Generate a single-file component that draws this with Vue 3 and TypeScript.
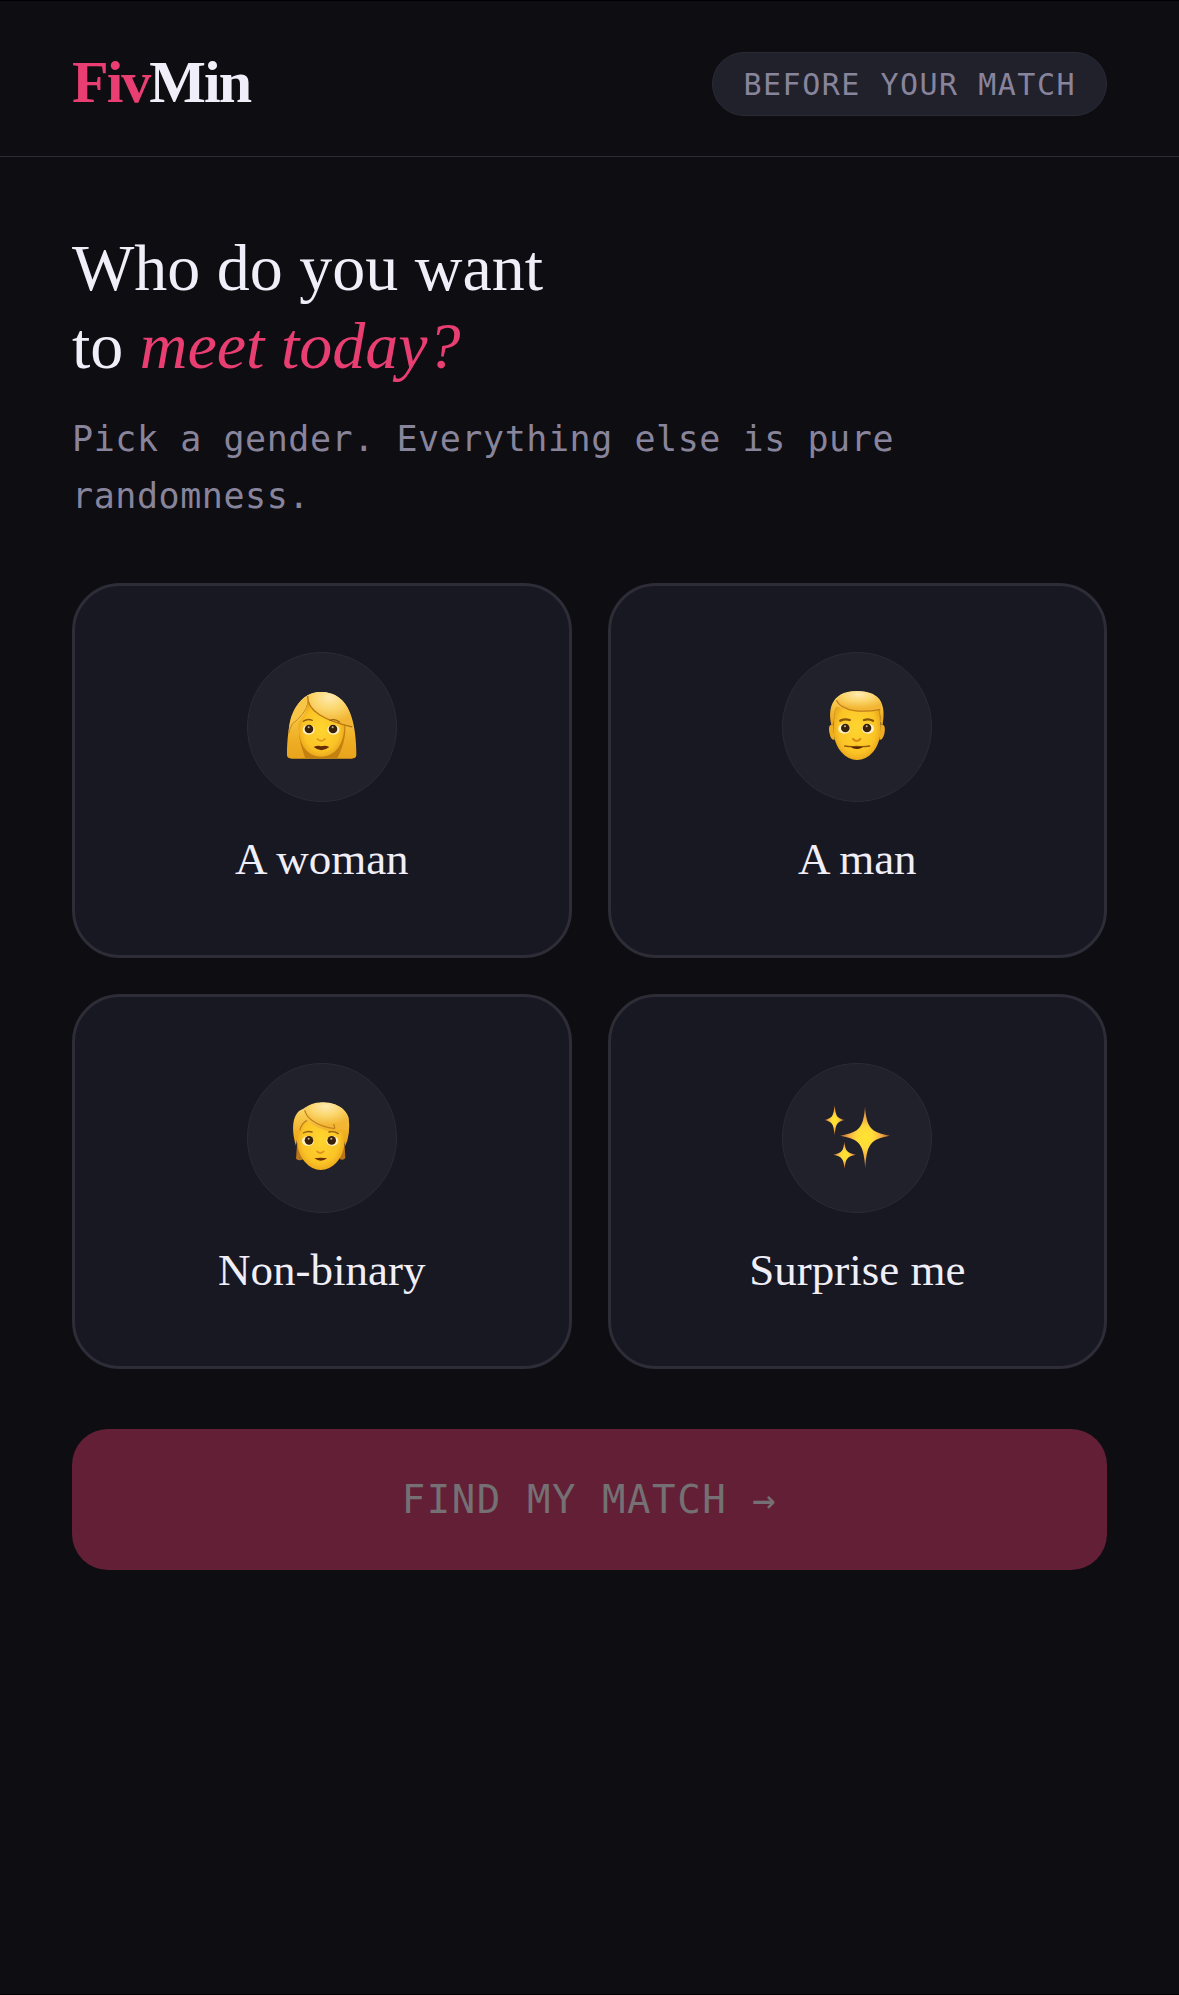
<script setup lang="ts">
import { ref } from 'vue'

type ChoiceId = 'woman' | 'man' | 'nonbinary' | 'surprise'

interface Choice {
  id: ChoiceId
  label: string
  viewBox: string
}

const choices: Choice[] = [
  { id: 'woman', label: 'A woman', viewBox: '24 39 444 444' },
  { id: 'man', label: 'A man', viewBox: '39 39 444 444' },
  { id: 'nonbinary', label: 'Non-binary', viewBox: '24 42 444 444' },
  { id: 'surprise', label: 'Surprise me', viewBox: '39 42 444 444' },
]

const selected = ref<ChoiceId | null>(null)
</script>

<template>
  <div class="page">
    <header class="header">
      <div class="logo"><span class="accent">Fiv</span>Min</div>
      <span class="pill">BEFORE YOUR MATCH</span>
    </header>

    <main class="main">
      <h1 class="title">Who do you want<br />to <em class="accent">meet today?</em></h1>
      <p class="subtitle">Pick a gender. Everything else is pure randomness.</p>

      <div class="choices">
        <button
          v-for="choice in choices"
          :key="choice.id"
          type="button"
          class="card"
          :class="{ selected: selected === choice.id }"
          :aria-pressed="selected === choice.id"
          @click="selected = choice.id"
        >
          <span class="avatar">
            <svg :viewBox="choice.viewBox" aria-hidden="true">
              <defs>
                <radialGradient :id="choice.id + '-skin'" cx="0.5" cy="0.5" r="0.6">
                  <stop offset="0" stop-color="#ffd52f" />
                  <stop offset="0.65" stop-color="#fbc426" />
                  <stop offset="1" stop-color="#e09617" />
                </radialGradient>
                <linearGradient :id="choice.id + '-hair'" x1="0" y1="0" x2="0" y2="1">
                  <stop offset="0" stop-color="#ffe291" />
                  <stop offset="0.3" stop-color="#f8ca50" />
                  <stop offset="0.7" stop-color="#efaf24" />
                  <stop offset="1" stop-color="#e8a31c" />
                </linearGradient>
                <radialGradient :id="choice.id + '-shine'" cx="0.5" cy="0.15" r="0.7">
                  <stop offset="0" stop-color="#ffeab0" />
                  <stop offset="0.5" stop-color="#fbd66c" />
                  <stop offset="1" stop-color="#f2b634" />
                </radialGradient>
                <radialGradient :id="choice.id + '-star'" cx="0.5" cy="0.5" r="0.5">
                  <stop offset="0" stop-color="#ffe52e" />
                  <stop offset="0.35" stop-color="#ffd93a" />
                  <stop offset="0.65" stop-color="#f3ac45" />
                  <stop offset="1" stop-color="#a65a2c" />
                </radialGradient>
              </defs>

              <template v-if="choice.id === 'woman'">
                <path d="M141 346C141 300 146 250 160 218C177 178 204 156 243 156C285 156 314 179 330 218C344 252 349 300 349 346Q348 356 335 356H155Q142 356 141 346Z" :fill="`url(#${choice.id}-hair)`" />
                <path d="M178 245C172 290 186 326 196 355H292C302 335 322 290 315 245Z" fill="#c4810f" />
                <path d="M204 184C200 216 188 232 175 250C174 306 196 350 243 350C289 350 313 308 313 256C270 246 225 220 204 184Z" :fill="`url(#${choice.id}-skin)`" />
                <path d="M203 167C203 196 190 222 160 243C151 252 148 264 146 278C148 240 157 196 203 167Z" fill="#f8c546" />
                <path d="M200 168C238 145 298 155 322 202C333 224 336 242 337 262C294 249 222 232 205 184Z" :fill="`url(#${choice.id}-shine)`" />
                <path d="M203 168C201 214 254 241 337 261" fill="none" stroke="#bc7614" stroke-width="4" />
                <path d="M204 180C203 212 176 237 157 252Q149 264 147 280" fill="none" stroke="#d18b16" stroke-width="3" />
                <ellipse cx="206" cy="269" rx="18" ry="15" fill="#fff3ca" />
                <ellipse cx="280" cy="269" rx="18" ry="15" fill="#fff3ca" />
                <circle cx="207" cy="267" r="13" fill="#392009" />
                <circle cx="279" cy="267" r="13" fill="#392009" />
                <circle cx="206" cy="262" r="3" fill="#c8b99d" />
                <circle cx="278" cy="262" r="3" fill="#c8b99d" />
                <path d="M190 244Q202 235 217 241M270 241Q286 235 298 246" fill="none" stroke="#915d0d" stroke-width="4" stroke-linecap="round" />
                <path d="M232 297Q244 308 255 297" fill="none" stroke="#df941c" stroke-width="5" stroke-linecap="round" />
                <path d="M221 321Q234 315 244 319Q255 315 268 321Q244 340 221 321Z" fill="#642b08" />
              </template>

              <template v-else-if="choice.id === 'man'">
                <path d="M189 255C177 250 175 263 179 281C181 294 187 301 194 299ZM332 255C344 250 347 263 343 281C340 294 334 301 328 299Z" fill="#efad21" />
                <path d="M260 165C203 165 188 206 190 270C192 326 228 360 261 360C296 360 330 326 332 270C334 206 318 165 260 165Z" :fill="`url(#${choice.id}-skin)`" />
                <path d="M186 260C173 218 178 153 260 153C340 153 348 202 337 260C331 253 332 227 328 211C280 219 231 214 204 200C191 214 195 241 186 260Z" :fill="`url(#${choice.id}-hair)`" />
                <path d="M199 181C217 145 305 145 329 180Q337 195 331 208C282 218 216 217 199 181Z" :fill="`url(#${choice.id}-shine)`" />
                <path d="M199 181C216 217 282 218 331 208" fill="none" stroke="#bf7f17" stroke-width="4" />
                <path d="M201 201Q192 211 193 239M329 211Q328 232 332 246" fill="none" stroke="#d89b27" stroke-width="3" />
                <ellipse cx="223" cy="266" rx="18" ry="15" fill="#fff3ca" />
                <ellipse cx="294" cy="266" rx="18" ry="15" fill="#fff3ca" />
                <circle cx="226" cy="264" r="13" fill="#392009" />
                <circle cx="291" cy="264" r="13" fill="#392009" />
                <circle cx="225" cy="259" r="3" fill="#c8b99d" />
                <circle cx="290" cy="259" r="3" fill="#c8b99d" />
                <path d="M211 242Q225 235 239 240M282 240Q296 235 309 242" fill="none" stroke="#885508" stroke-width="7" stroke-linecap="round" />
                <path d="M249 297Q260 309 271 297" fill="none" stroke="#d68a16" stroke-width="6" stroke-linecap="round" />
                <path d="M224 318Q244 321 260 319Q279 321 299 318" fill="none" stroke="#965909" stroke-width="4" stroke-linecap="round" />
                <path d="M241 320H280Q261 334 241 320Z" fill="#542306" />
              </template>

              <template v-else-if="choice.id === 'nonbinary'">
                <path d="M171 285L168 326Q177 334 190 328L188 285ZM299 285L300 328Q311 332 316 324L314 285Z" fill="#b97618" />
                <path d="M243 175C187 175 170 215 171 273C173 325 209 360 242 360C277 360 311 326 314 276C317 215 300 175 243 175Z" :fill="`url(#${choice.id}-skin)`" />
                <path d="M168 287C152 234 158 187 189 177C231 145 312 153 326 203Q332 251 316 287Q311 275 309 246C275 250 228 235 201 212C188 225 182 233 179 245C172 256 171 270 168 287Z" :fill="`url(#${choice.id}-hair)`" />
                <path d="M191 183C204 151 286 145 315 186C327 207 324 226 321 237C275 239 222 228 191 183Z" :fill="`url(#${choice.id}-shine)`" />
                <path d="M194 181C202 211 240 230 283 236M201 211Q183 221 180 241M281 222L285 236" fill="none" stroke="#c4821d" stroke-width="4" />
                <ellipse cx="204" cy="273" rx="18" ry="15" fill="#fff3ca" />
                <ellipse cx="277" cy="273" rx="18" ry="15" fill="#fff3ca" />
                <circle cx="207" cy="271" r="13" fill="#392009" />
                <circle cx="275" cy="271" r="13" fill="#392009" />
                <circle cx="206" cy="266" r="3" fill="#c8b99d" />
                <circle cx="274" cy="266" r="3" fill="#c8b99d" />
                <path d="M190 249Q202 242 216 246M267 246Q282 242 295 251" fill="none" stroke="#92600f" stroke-width="4" stroke-linecap="round" />
                <path d="M231 304Q241 314 251 304" fill="none" stroke="#df941c" stroke-width="5" stroke-linecap="round" />
                <path d="M223 325Q242 321 262 325Q242 339 223 325Z" fill="#6b2f08" />
              </template>

              <template v-else>
                <path d="M285 170C290 230 300 247 360 257C300 267 290 284 286 355C281 284 271 267 210 257C271 247 280 230 285 170Z" :fill="`url(#${choice.id}-star)`" />
                <path d="M194 165C197 198 200 204 223 210C200 216 197 222 194 256C190 222 188 216 164 210C188 204 190 198 194 165Z" :fill="`url(#${choice.id}-star)`" />
                <path d="M223 275C226 302 231 309 258 314C231 319 227 326 224 356C220 326 216 319 190 314C216 309 220 302 223 275Z" :fill="`url(#${choice.id}-star)`" />
              </template>
            </svg>
          </span>
          <span class="card-label">{{ choice.label }}</span>
        </button>
      </div>

      <button type="button" class="submit" :disabled="selected === null">FIND MY MATCH →</button>
    </main>
  </div>
</template>

<style>
body {
  margin: 0;
  background: #0d0d12;
}
</style>

<style scoped>
.page {
  box-sizing: border-box;
  min-height: 100vh;
  border-top: 1px solid #000000;
  border-bottom: 1px solid #000000;
  background: #0d0d12;
  color: #f0eef8;
  font-family: 'Liberation Serif', 'Times New Roman', serif;
}

.accent {
  color: #e83e72;
}

.header {
  display: flex;
  align-items: flex-end;
  justify-content: space-between;
  padding: 47px 72px 40px;
  border-bottom: 1px solid #2c2b36;
}

.logo {
  font-size: 60px;
  font-weight: 700;
  line-height: 68px;
  letter-spacing: -2px;
}

.pill {
  padding: 1px 30px 0;
  border: 1px solid #2a2a35;
  border-radius: 32px;
  background: #21212c;
  color: #88849b;
  font-family: 'DejaVu Sans Mono', monospace;
  font-size: 30px;
  line-height: 61px;
  letter-spacing: 0.05em;
}

.main {
  padding: 72px;
}

.title {
  margin: 0 0 26px;
  font-size: 66px;
  font-weight: 400;
  line-height: 78px;
}

.subtitle {
  margin: 0 0 58px;
  color: #88849b;
  font-family: 'DejaVu Sans Mono', monospace;
  font-size: 35px;
  line-height: 57px;
  letter-spacing: 0.016em;
}

.choices {
  display: grid;
  grid-template-columns: 1fr 1fr;
  gap: 36px;
  margin-bottom: 60px;
}

.card {
  display: flex;
  flex-direction: column;
  align-items: center;
  gap: 29px;
  padding: 66px 24px 67px;
  border: 3px solid #2d2c37;
  border-radius: 48px;
  background: #181822;
  color: inherit;
  font-family: inherit;
  font-size: 45px;
  line-height: 57px;
  cursor: pointer;
}

.card.selected {
  border-color: #e83e72;
}

.avatar {
  box-sizing: border-box;
  width: 150px;
  height: 150px;
  border: 1px solid #2b2b36;
  border-radius: 50%;
  background: #21212c;
}

.avatar svg {
  display: block;
  width: 100%;
  height: 100%;
}

.submit {
  display: block;
  width: 100%;
  padding: 42px 24px;
  border: 0;
  border-radius: 36px;
  background: #e83e72;
  color: #ffffff;
  font-family: 'DejaVu Sans Mono', monospace;
  font-size: 39px;
  line-height: 57px;
  letter-spacing: 0.04em;
  cursor: pointer;
}

.submit:disabled {
  background: #631f36;
  color: #747073;
  cursor: default;
}
</style>
